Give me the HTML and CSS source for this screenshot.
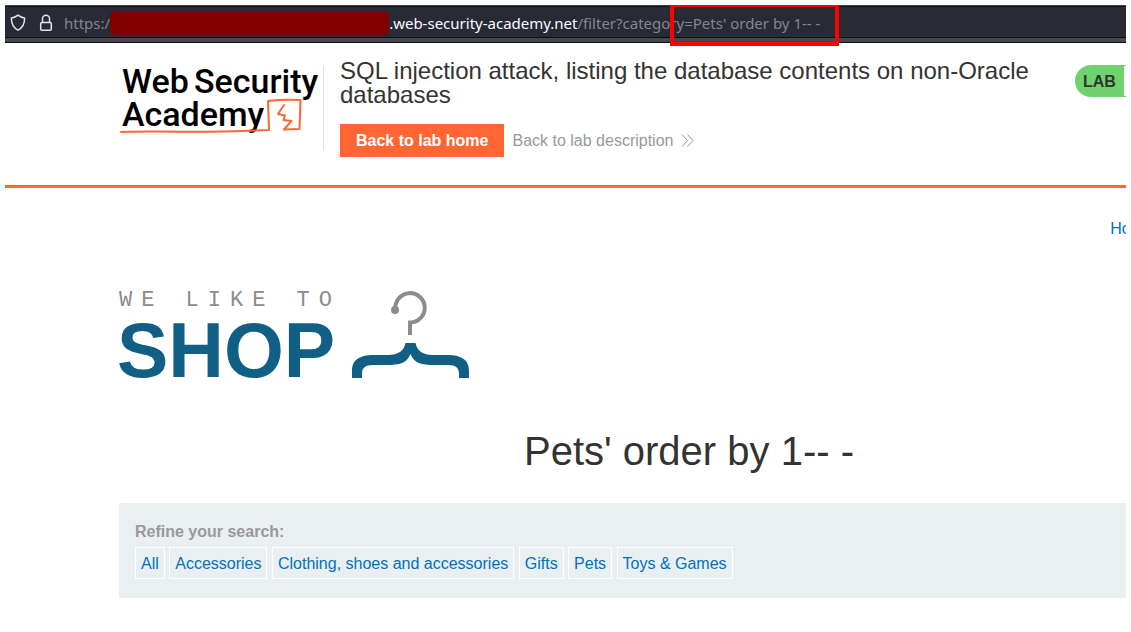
FILE: index.html
```html
<!DOCTYPE html>
<html lang="en">
<head>
<meta charset="utf-8">
<title>SQL injection attack, listing the database contents on non-Oracle databases</title>
<link rel="stylesheet" href="styles.css">
</head>
<body>
<div class="frame">
  <div class="urlbar">
    <svg class="shield" width="16" height="18" viewBox="0 0 16 18" aria-hidden="true"><path d="M8 1.2C10 2.8 12.300 3.800 14.600 4.100C14.700 9.500 13.200 13.600 8 16.200C2.800 13.600 1.300 9.500 1.400 4.100C3.700 3.800 6 2.800 8 1.200Z"/></svg>
    <svg class="lock" width="14" height="18" viewBox="0 0 14 18" aria-hidden="true"><rect x="1.700" y="8.500" width="10.600" height="7.800" rx="1.200"/><path d="M3.500 8.500V4.800a3.500 3.500 0 0 1 7 0V8.500"/></svg>
    <div class="address"><span>https:/</span><span class="redacted"></span><span class="domain">.web-security-academy.net</span><span>/filter?category</span><span class="marked">=Pets' order by 1-- -</span></div>
  </div>

  <header class="lab-header">
    <div class="container lab-row">
      <div class="brand">
        <svg width="202" height="76" viewBox="0 0 202 76" role="img" aria-label="Web Security Academy">
          <g class="academy-text">
            <text x="1" y="28">Web</text>
            <text x="73" y="28">Security</text>
            <text x="1" y="61">Academy</text>
          </g>
          <path class="ink" d="M0 67C40 65.500 80 68 120 66L148 65L147 36Q163 34 179.500 35L178.500 64L163 64.500"/>
          <path class="ink" d="M163 40L157 49L164 50.500L162.500 55L170.500 56L163 64.500"/>
        </svg>
      </div>
      <div class="lab-title">
        <h2>SQL injection attack, listing the database contents on non-Oracle databases</h2>
        <div class="lab-links">
          <a class="home-button" href="#home">Back to lab home</a>
          <a class="description" href="#description">Back to lab description
            <svg width="13" height="13" viewBox="0 0 13 13" aria-hidden="true"><path d="M1 .5L6.500 6.500L1 12.500M6.500 .5L12 6.500L6.500 12.500"/></svg>
          </a>
        </div>
      </div>
      <div class="status">LAB</div>
    </div>
  </header>

  <main class="container">
    <nav class="top-links"><a href="#top">Home</a></nav>
    <svg class="shop-logo" width="352" height="92" viewBox="0 0 352 92" role="img" aria-label="We like to shop">
      <text class="tagline" x="0" y="16" xml:space="preserve">WE LIKE TO</text>
      <text class="shop" x="-2" y="87">SHOP</text>
      <path class="hook" d="M276.500 20A14.700 14.700 0 1 1 291 32.500V45"/>
      <circle class="hook-end" cx="276" cy="20" r="4"/>
      <path class="hanger" d="M286.500 53H296.500C298 61 304 65 314 65H328C344 65 350 71 350 81V88H340V84C340 78 337 75 329 75H316C302 75 295 73 291.500 64C288 73 281 75 267 75H254C246 75 243 78 243 84V88H233V81C233 71 239 65 255 65H269C279 65 285 61 286.500 53Z"/>
    </svg>
    <h1>Pets' order by 1-- -</h1>
    <section class="filters">
      <h3>Refine your search:</h3>
      <a href="#all">All</a>
      <a href="#accessories">Accessories</a>
      <a href="#clothing">Clothing, shoes and accessories</a>
      <a href="#gifts">Gifts</a>
      <a href="#pets">Pets</a>
      <a href="#toys">Toys &amp; Games</a>
    </section>
  </main>
</div>
</body>
</html>
```
FILE: styles.css
```css
* { box-sizing: border-box; }
body {
  margin: 0;
  padding: 5px;
  background: #fff;
  color: #333332;
  font: 16px/24px "Liberation Sans", Arial, sans-serif;
}
a { color: #0071bc; text-decoration: none; }
h1, h2, h3 { margin: 0; font-weight: 400; }
svg { display: block; flex: none; overflow: visible; }
.frame { overflow: hidden; }

.urlbar {
  display: flex;
  align-items: center;
  height: 38px;
  padding: 0 5px 2px;
  background: #282a36;
  border-top: 1px solid #42464a;
  border-bottom: 1px solid #0c0d14;
  box-shadow: inset 0 1px #11131b, inset 0 -4px #45484c, inset 0 -5px #0c0d14;
}
.shield, .lock { fill: none; stroke: #e4e4e6; stroke-width: 1.500; }
.lock { margin-left: 13px; }
.address {
  display: flex;
  align-items: center;
  margin-left: 11px;
  color: #85868c;
  font: 15px/24px "Noto Sans", sans-serif;
  white-space: nowrap;
}
.redacted { width: 279px; height: 23px; border-radius: 4px; background: #800000; }
.domain { color: #fbfbfe; }
.marked { position: relative; }
.marked::after {
  content: "";
  position: absolute;
  inset: -8px -19px -11px -14px;
  border: 4px solid #f00;
}

.container { min-width: 1140px; margin-left: 114px; }
.lab-header { border-bottom: 3px solid #ff6633; }
.lab-row { display: flex; align-items: flex-start; padding: 16px 0 28px; }
.brand {
  flex: none;
  height: 86px;
  margin-top: 6px;
  padding-left: 2px;
  border-right: 1px solid #e0e0e0;
}
.academy-text { font: 500 34px Roboto, sans-serif; fill: #000; }
.ink { fill: none; stroke: #ff6633; stroke-width: 2; stroke-linejoin: round; stroke-linecap: round; }
.lab-title {
  width: 719px;
  margin: 0 0 0 16px;
}
.lab-title h2 { font-size: 24px; line-height: 24px; }
.lab-links { display: flex; gap: 8px; margin-top: 17px; }
.home-button { padding: 5px 16px 4px; background: #ff6633; color: #fff; font-weight: 700; }
.description { display: flex; align-items: center; gap: 8px; color: #999; }
.description svg { fill: none; stroke: #999; }
.status {
  width: 160px;
  height: 32px;
  margin: 6px 0 0 16px;
  padding-left: 8px;
  border: 1px solid #70d26e;
  border-left: 0;
  border-radius: 16px 0 0 16px;
  background: linear-gradient(90deg, #70d26e 49px, #fff 49px);
  font-weight: 700;
  line-height: 32px;
}

.top-links { display: flex; justify-content: flex-end; padding: 29px 106px 0 0; }
.shop-logo { margin-top: 49px; }
.tagline { font: 22px "Liberation Mono", monospace; letter-spacing: 9px; fill: #8c8c8c; }
.shop { font: 700 77px "Liberation Sans", Arial, sans-serif; fill: #115f84; }
.hook { fill: none; stroke: #8c8c8c; stroke-width: 4; }
.hook-end { fill: #8c8c8c; }
.hanger { fill: #115f84; }
h1 { margin-top: 45px; font-size: 40px; line-height: 48px; text-align: center; }
.filters { margin-top: 28px; padding: 17px 16px 19px; background: #eaeff2; }
.filters h3 { margin-bottom: 3px; color: #999; font-size: 16px; font-weight: 700; line-height: 24px; }
.filters a { display: inline-block; padding: 4px 5px 2px; border: 1px solid #fff; }
```
